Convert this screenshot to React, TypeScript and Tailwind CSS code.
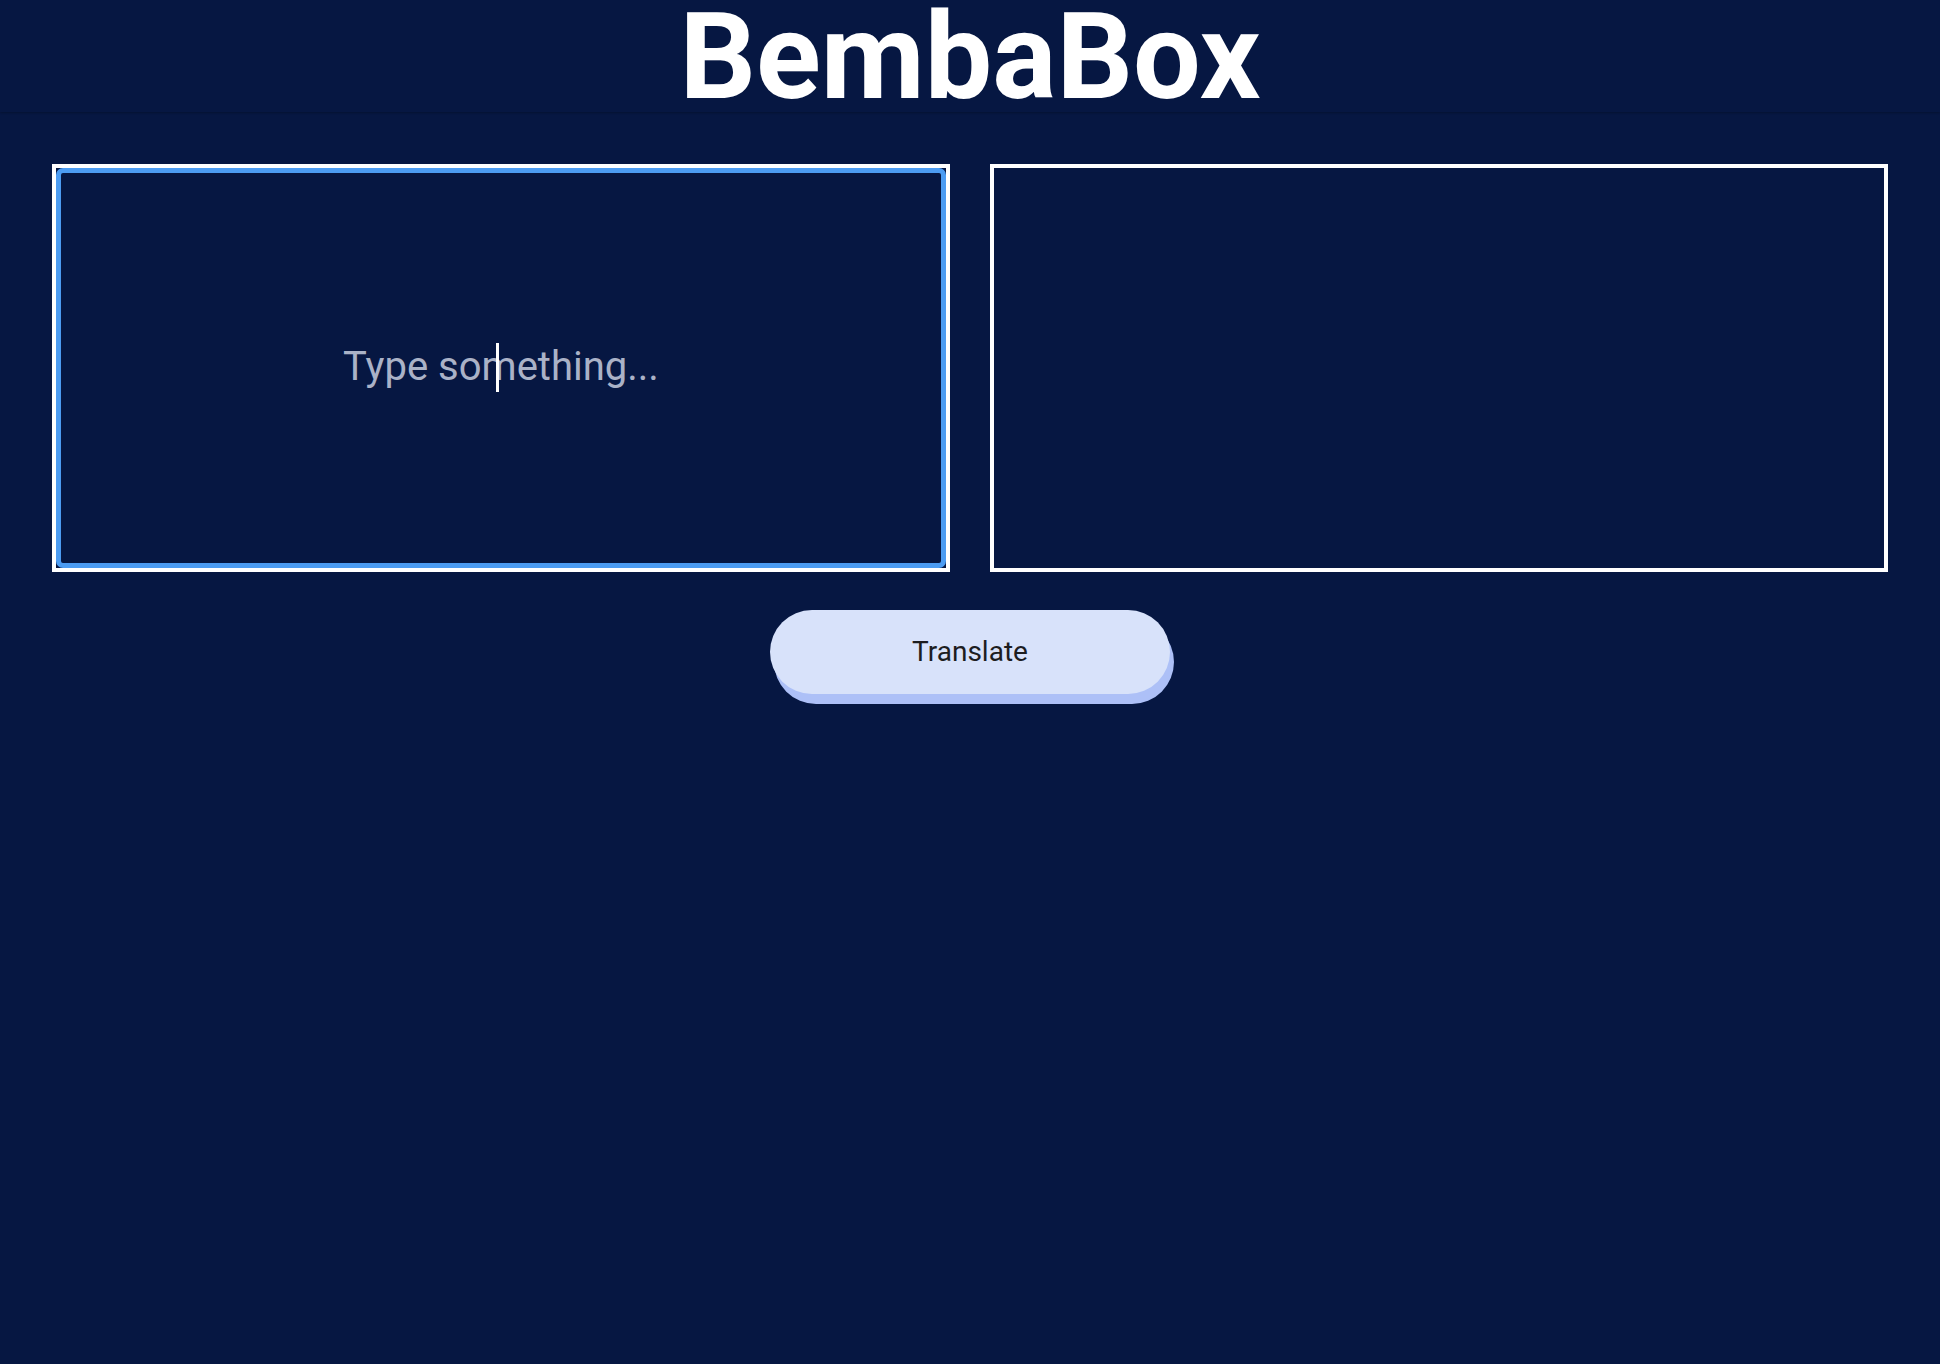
export default function App() {
    return (
        <div className="h-screen overflow-hidden w-full bg-[#061742] font-[Roboto,sans-serif]">
            {/* Header */}
            <header className="h-[112px] flex justify-center shadow-[0_1px_2px_rgba(0,0,0,0.25)]">
                <h1 className="text-[120px] leading-[114px] font-bold text-white">BembaBox</h1>
            </header>

            <main className="px-[52px] pt-[52px]">
                <div className="grid grid-cols-2 gap-10">
                    {/* Input box */}
                    <div className="relative h-[408px] border-4 border-white">
                        <textarea
                            className="w-full h-full block resize-none bg-transparent border-[5px] border-[#4c9cf2] rounded-[7px] outline-none text-center text-[40px] leading-[48px] pt-[170px] text-white placeholder:text-[#aab2c7]"
                            placeholder="Type something..."
                        />
                        {/* caret */}
                        <span className="absolute left-[440px] top-[175px] w-[3px] h-[49px] bg-white pointer-events-none" />
                    </div>

                    {/* Output box */}
                    <div className="h-[408px] border-4 border-white" />
                </div>

                <div className="flex justify-center pt-[38px]">
                    <button className="w-[400px] h-[84px] rounded-full bg-[#d8e2fa] shadow-[4px_10px_0_#adc0f7] text-[28px] text-[#1d1d1f]">
                        Translate
                    </button>
                </div>
            </main>
        </div>
    );
}
